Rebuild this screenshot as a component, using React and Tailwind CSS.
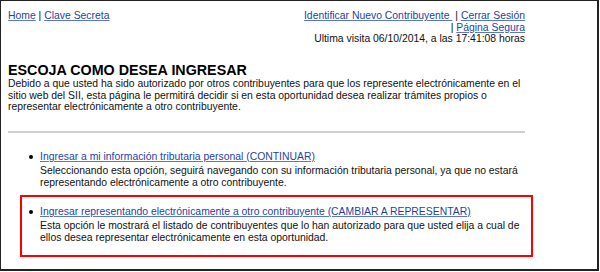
const A = ({ children }) => (
  <a href="#" className="text-[#1f3fa6] underline decoration-[#5b78c8]">{children}</a>
);

function Item({ link, children }) {
  return (
    <div className="flex">
      <div className="w-[11px] shrink-0">
        <div className="mt-[4px] w-[4px] h-[4px] rounded-full bg-black"></div>
      </div>
      <div className="w-[485px]">
        <div className="mb-[2.5px]"><A>{link}</A></div>
        <div>{children}</div>
      </div>
    </div>
  );
}

export default function App() {
  return (
    <div className="w-[600px] h-[272px] bg-white">
      <div className="w-[599px] h-[271px] border-t border-l border-r-2 border-b-2 border-[#222] pl-[7px] pt-[9px] font-['Liberation_Sans',Arial,sans-serif] text-[10.4px] leading-[11.5px] text-[#111]">
        <div className="w-[517px]">
          <div className="flex justify-between">
            <div>
              <A>Home</A> | <A>Clave Secreta</A>
            </div>
            <div className="text-right">
              <div>
                <A>Identificar Nuevo Contribuyente&nbsp;</A> | <A>Cerrar Sesión</A>
              </div>
              <div>
                | <A>Página Segura</A>
              </div>
              <div>Ultima visita 06/10/2014, a las 17:41:08 horas</div>
            </div>
          </div>
          <h1 className="mt-[17.5px] text-[14.3px] leading-[16px] font-bold text-black">
            ESCOJA COMO DESEA INGRESAR
          </h1>
          <p>
            Debido a que usted ha sido autorizado por otros contribuyentes para que los represente electrónicamente en el sitio web del SII, esta página le permitirá decidir si en esta oportunidad desea realizar trámites propios o representar electrónicamente a otro contribuyente.
          </p>
          <div className="mt-[18.5px] border-t-2 border-[#cfcfcf]"></div>
          <div className="mt-[18px] ml-[21px]">
            <Item link="Ingresar a mi información tributaria personal (CONTINUAR)">
              Seleccionando esta opción, seguirá navegando con su información tributaria personal, ya que no estará representando electrónicamente a otro contribuyente.
            </Item>
          </div>
          <div className="mt-[7px] ml-[12px] w-[513px] border-2 border-[#ff0000] pl-[7px] pt-[9px] pb-[12px]">
            <Item link="Ingresar representando electrónicamente a otro contribuyente (CAMBIAR A REPRESENTAR)">
              Esta opción le mostrará el listado de contribuyentes que lo han autorizado para que usted elija a cual de ellos desea representar electrónicamente en esta oportunidad.
            </Item>
          </div>
        </div>
      </div>
    </div>
  );
}
